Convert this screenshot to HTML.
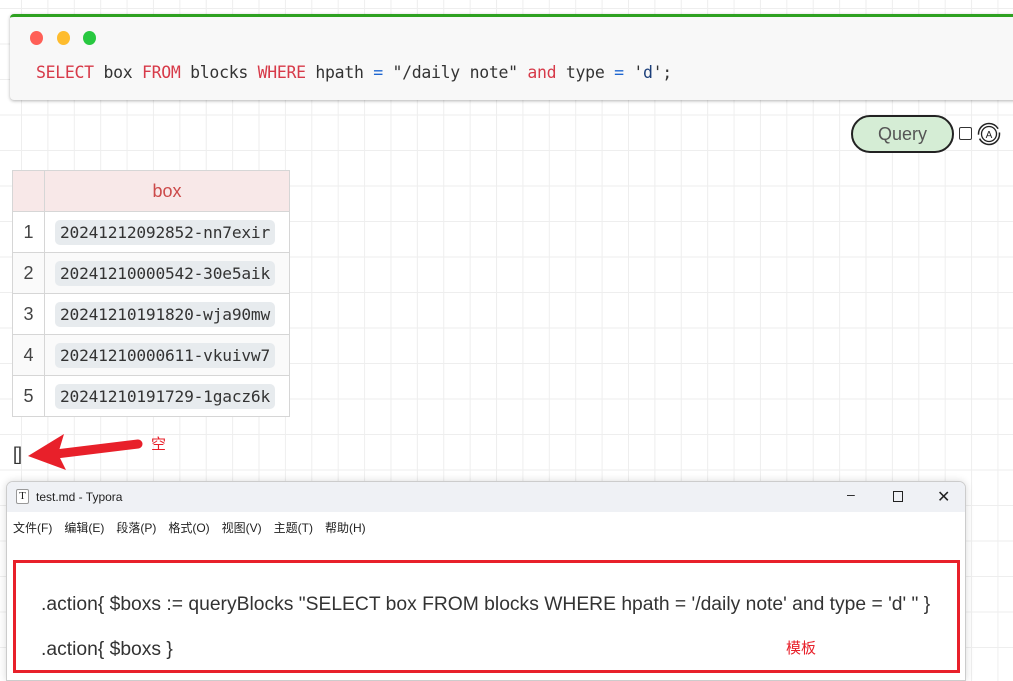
<!DOCTYPE html>
<html><head><meta charset="utf-8"><style>
*{margin:0;padding:0;box-sizing:border-box}
body{width:1013px;height:677px;overflow:hidden;position:relative;background:#fff;
background-image:linear-gradient(to right,#eeeeee 1px,transparent 1px),linear-gradient(to bottom,#eeeeee 1px,transparent 1px);
background-size:26.4px 35.5px;background-position:21px 8px;font-family:"Liberation Sans","Noto Sans CJK SC",sans-serif}
.code{position:absolute;left:10px;top:14px;width:1010px;height:86px;background:#f8f8f8;border-top:3px solid #2ea121;border-radius:4px;box-shadow:0 1px 3px rgba(0,0,0,.3)}
.dot{position:absolute;top:14px;width:13px;height:14px;border-radius:50%}
.sql{position:absolute;left:26px;top:46px;font-family:"DejaVu Sans Mono","Liberation Mono",monospace;font-size:16.5px;color:#333;white-space:pre;letter-spacing:-0.3px}
.k{color:#d73a49}.o{color:#1e66d0}.s{color:#1c3f7a}
.btn{position:absolute;left:851px;top:115px;width:103px;height:38px;border:2px solid #222;border-radius:19px;background:#d5edd5;color:#555;font-size:18px;text-align:center;line-height:34px}
table{position:absolute;left:12px;top:170px;border-collapse:collapse;font-size:18px}
td,th{border:1px solid #d6d6d6;height:41px}
th{background:#f8e8e8;color:#cc4a4a;font-weight:normal;font-size:18px}
td.n{width:32px;text-align:center;color:#444;background:#fff}
td.v{width:245px;padding:0 10px;background:#fff}
tr:nth-child(odd) td{background:#fafafa}
.chip{display:inline-block;background:#e7ebee;border-radius:5px;padding:3px 5px;font-family:"DejaVu Sans Mono","Liberation Mono",monospace;font-size:16.2px;color:#333;letter-spacing:-0.2px}
.win{position:absolute;left:6px;top:481px;width:960px;height:200px;background:#fff;border:1px solid #ccc;border-radius:7px 7px 0 0;box-shadow:0 0 8px rgba(0,0,0,.15);overflow:hidden}
.tb{height:30px;background:#eff1f5;position:relative;font-size:12px;color:#222}
.menu{height:30px;font-size:12px;color:#222;padding:7px 0 0 6px;word-spacing:0}
.menu span{margin-right:12px}
.red{position:absolute;left:6px;top:78px;width:947px;height:113px;border:3px solid #e8202a}
.line{position:absolute;left:34px;font-size:19.3px;color:#333;font-family:"Liberation Sans",sans-serif;letter-spacing:0}
</style></head><body>
<div class="code">
<div class="dot" style="left:20px;background:#ff5f57"></div>
<div class="dot" style="left:47px;background:#febc2e"></div>
<div class="dot" style="left:73px;background:#28c840"></div>
<div class="sql"><span class="k">SELECT</span> box <span class="k">FROM</span> blocks <span class="k">WHERE</span> hpath <span class="o">=</span> "/daily note" <span class="k">and</span> type <span class="o">=</span> '<span class="s">d</span>';</div>
</div>
<div class="btn">Query</div>
<div style="position:absolute;left:959px;top:127px;width:13px;height:13px;border:1px solid #333;border-radius:2px;background:#fff"></div>
<svg style="position:absolute;left:977px;top:122px" width="24" height="24" viewBox="0 0 24 24"><circle cx="12" cy="12" r="10.5" fill="none" stroke="#222" stroke-width="1.5" stroke-dasharray="28 4"/><circle cx="12" cy="12" r="7.5" fill="none" stroke="#222" stroke-width="1.3"/><text x="12" y="16" font-size="10" text-anchor="middle" fill="#222" font-family="Liberation Sans">A</text></svg>
<table>
<tr><th style="width:32px"></th><th>box</th></tr>
<tr><td class="n">1</td><td class="v"><span class="chip">20241212092852-nn7exir</span></td></tr>
<tr><td class="n">2</td><td class="v"><span class="chip">20241210000542-30e5aik</span></td></tr>
<tr><td class="n">3</td><td class="v"><span class="chip">20241210191820-wja90mw</span></td></tr>
<tr><td class="n">4</td><td class="v"><span class="chip">20241210000611-vkuivw7</span></td></tr>
<tr><td class="n">5</td><td class="v"><span class="chip">20241210191729-1gacz6k</span></td></tr>
</table>
<div style="position:absolute;left:13px;top:444px;font-size:18px;color:#333;font-family:'Liberation Sans',sans-serif;letter-spacing:-1px">[]</div>
<svg style="position:absolute;left:26px;top:430px" width="120" height="40" viewBox="0 0 120 40"><path d="M112 14 L30 24" stroke="#e8202a" stroke-width="9" stroke-linecap="round"/><path d="M2 26 L38 4 L32 24 L40 40 Z" fill="#e8202a"/></svg>
<div style="position:absolute;left:151px;top:433px;font-size:15px;color:#e8202a">空</div>
<div class="win">
<div class="tb"><span style="position:absolute;left:9px;top:7px;border:1px solid #999;border-radius:2px;width:13px;height:15px;font-size:11px;text-align:center;line-height:13px;font-family:'Liberation Serif',serif;background:#fff">T</span><span style="position:absolute;left:29px;top:8px">test.md - Typora</span>
<span style="position:absolute;left:840px;top:4px;font-size:14px">–</span>
<span style="position:absolute;left:886px;top:9px;width:10px;height:11px;border:1.3px solid #222"></span>
<span style="position:absolute;left:930px;top:5px;font-size:16px">✕</span></div>
<div class="menu"><span>文件(F)</span><span>编辑(E)</span><span>段落(P)</span><span>格式(O)</span><span>视图(V)</span><span>主题(T)</span><span>帮助(H)</span></div>
<div class="red"></div>
<div class="line" style="top:112px">.action{ $boxs := queryBlocks "SELECT box FROM blocks WHERE hpath = '/daily note' and type = 'd' " }</div>
<div class="line" style="top:157px">.action{ $boxs }</div>
<div style="position:absolute;left:779px;top:155px;font-size:15px;color:#e8202a">模板</div>
</div>
</body></html>
